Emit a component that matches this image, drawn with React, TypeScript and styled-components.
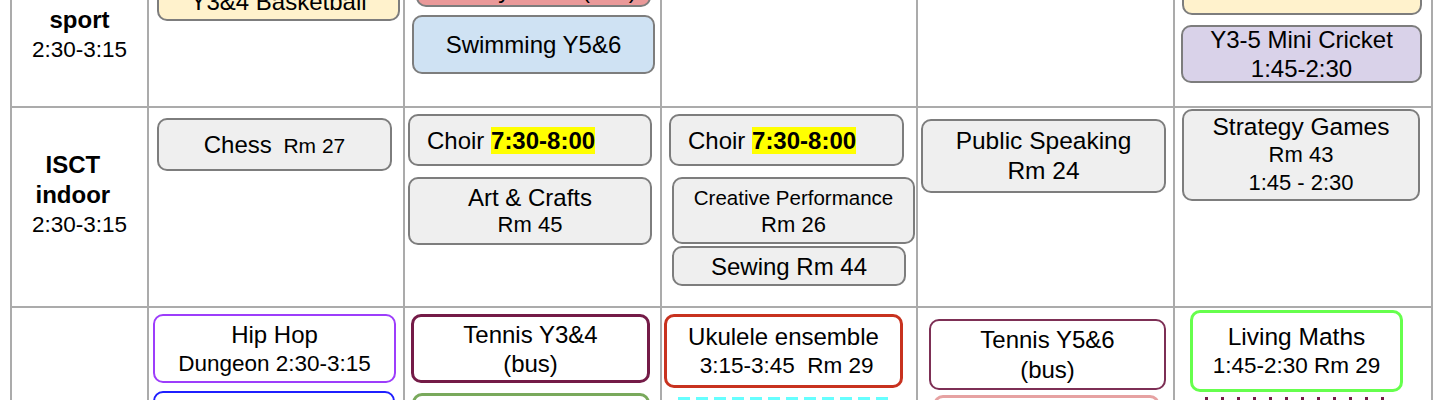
import styled, { createGlobalStyle } from 'styled-components';

const GlobalStyle = createGlobalStyle`
	body {
		margin: 0;
		background: #fff;
		color: #000;
		font-family: 'Liberation Sans', Arial, sans-serif;
		overflow: hidden;
	}
`;

const Timetable = () => {
	return (
		<>
			<GlobalStyle />
			<Table>
				{/* row 1: outdoor sport */}
				<Label>
					<Strong>ISCT</Strong>
					<Strong>sport</Strong>
					<Time>2:30-3:15</Time>
				</Label>
				<Cell>
					<Card $x={8} $top={48} $w={243} $h={40} $fill='#fff2cc'>
						<Line>Y3&amp;4 Basketball</Line>
					</Card>
				</Cell>
				<Cell>
					<Card $x={11} $top={38} $w={235} $h={36} $fill='#ea9999'>
						<Line>Hockey Y5&amp;6 (bus)</Line>
					</Card>
					<Card $x={7} $top={8} $w={243} $h={59} $fill='#cfe2f3'>
						<Line>Swimming Y5&amp;6</Line>
					</Card>
				</Cell>
				<Cell />
				<Cell />
				<Cell>
					<Card $x={7} $top={22} $w={240} $h={60} $fill='#fff2cc'>
						<Line>Y5&amp;6 Netball</Line>
					</Card>
					<Card $x={6} $top={10} $w={241} $h={58} $fill='#d9d2e9'>
						<Line>Y3-5 Mini Cricket</Line>
						<Line>1:45-2:30</Line>
					</Card>
				</Cell>

				{/* row 2: indoor */}
				<Label>
					<Strong>ISCT{'\u00a0\u00a0'}</Strong>
					<Strong>indoor{'\u00a0\u00a0'}</Strong>
					<Time>2:30-3:15</Time>
				</Label>
				<Cell>
					<Card $x={8} $top={10} $w={235} $h={53} $fill='#efefef'>
						<Line>
							Chess<Small $size={21}>{'\u00a0\u00a0'}Rm 27</Small>
						</Line>
					</Card>
				</Cell>
				<Cell>
					<Card $x={3} $top={6} $w={244} $h={52} $fill='#efefef' $left>
						<Line>
							Choir <Highlight>7:30-8:00</Highlight>
						</Line>
					</Card>
					<Card $x={3} $top={11} $w={244} $h={68} $fill='#efefef'>
						<Line $lh={27}>Art &amp; Crafts</Line>
						<Line $lh={27} $size={22}>
							Rm 45
						</Line>
					</Card>
				</Cell>
				<Cell>
					<Card $x={7} $top={6} $w={235} $h={52} $fill='#efefef' $left>
						<Line>
							Choir <Highlight>7:30-8:00</Highlight>
						</Line>
					</Card>
					<Card $x={10} $top={11} $w={243} $h={67} $fill='#efefef'>
						<Line $lh={27} $size={20.5}>
							Creative Performance
						</Line>
						<Line $lh={27} $size={22}>
							Rm 26
						</Line>
					</Card>
					<Card $x={10} $top={2} $w={234} $h={40} $fill='#efefef'>
						<Line>Sewing Rm 44</Line>
					</Card>
				</Cell>
				<Cell>
					<Card $x={3} $top={11} $w={245} $h={74} $fill='#efefef'>
						<Line $lh={30} $size={24.5}>
							Public Speaking
						</Line>
						<Line $lh={30} $size={24.5}>
							Rm 24
						</Line>
					</Card>
				</Cell>
				<Cell>
					<Card $x={7} $top={1} $w={238} $h={92} $fill='#efefef'>
						<Line $lh={28} $size={24.5}>
							Strategy Games
						</Line>
						<Line $lh={28} $size={22}>
							Rm 43
						</Line>
						<Line $lh={28} $size={22}>
							1:45 - 2:30
						</Line>
					</Card>
				</Cell>

				{/* row 3: clubs */}
				<Label />
				<Cell>
					<Card $x={4} $top={6} $w={243} $h={69} $edge='#9d3dfb'>
						<Line>Hip Hop</Line>
						<Line $size={22.5}>Dungeon 2:30-3:15</Line>
					</Card>
					<Card $x={4} $top={8} $w={242} $h={80} $edge='#1f1fff' />
				</Cell>
				<Cell>
					<Card $x={6} $top={6} $w={239} $h={69} $edge='#741b47' $bw={3}>
						<Line>Tennis Y3&amp;4</Line>
						<Line>(bus)</Line>
					</Card>
					<Card $x={7} $top={10} $w={238} $h={80} $edge='#79a95c' $bw={3} />
				</Cell>
				<Cell>
					<Card $x={2} $top={6} $w={239} $h={74} $edge='#c8321f' $bw={3}>
						<Line>Ukulele ensemble</Line>
						<Line $size={22.5}>{'\u00a03:15-3:45\u00a0\u00a0Rm 29'}</Line>
					</Card>
					<Edge $x={16} $top={9} $w={210} $color='#6ff' $dash={12} $space={6} $thick={4} />
				</Cell>
				<Cell>
					<Card $x={11} $top={11} $w={237} $h={71} $edge='#7d2f55'>
						<Line $lh={30}>Tennis Y5&amp;6</Line>
						<Line $lh={30}>(bus)</Line>
					</Card>
					<Card $x={15} $top={5} $w={227} $h={80} $edge='#e6a2a2' $bw={3} />
				</Cell>
				<Cell>
					<Card $x={15} $top={2} $w={213} $h={82} $edge='#66ff4d' $bw={3}>
						<Line $size={24.5}>Living Maths</Line>
						<Line $size={22.5}>1:45-2:30 Rm 29</Line>
					</Card>
					<Edge $x={30} $top={5} $w={190} $color='#741b47' $dash={3} $space={13} $thick={5} />
				</Cell>
			</Table>
		</>
	);
};

const Table = styled.div`
	display: grid;
	grid-template-columns: 135px 254px 255px 254px 255px 256px;
	grid-template-rows: 173px 198px 160px;
	gap: 2px;
	padding: 2px;
	width: fit-content;
	margin: -69px 0 0 10px;
	background: #ababab;
`;

const Cell = styled.div`
	display: flex;
	flex-direction: column;
	min-width: 0;
	background: #fff;
`;

const Label = styled(Cell)`
	align-items: center;
	padding-top: 42px;
	box-sizing: border-box;
	white-space: pre;
`;

const Strong = styled.div`
	font-weight: bold;
	font-size: 24px;
	line-height: 30px;
`;

const Time = styled.div`
	font-size: 22.5px;
	line-height: 29px;
`;

type CardProps = {
	$x: number;
	$top: number;
	$w: number;
	$h: number;
	$fill?: string;
	$edge?: string;
	$bw?: number;
	$left?: boolean;
};

const Card = styled.div<CardProps>`
	box-sizing: border-box;
	flex: none;
	display: flex;
	flex-direction: column;
	justify-content: center;
	align-items: ${({ $left }) => ($left ? 'flex-start' : 'center')};
	width: ${({ $w }) => $w}px;
	height: ${({ $h }) => $h}px;
	margin: ${({ $top, $x }) => `${$top}px 0 0 ${$x}px`};
	padding-left: ${({ $left }) => ($left ? '17px' : '0')};
	background: ${({ $fill }) => $fill ?? '#fff'};
	border: ${({ $bw }) => $bw ?? 2}px solid ${({ $edge }) => $edge ?? '#7d7d7d'};
	border-radius: 10px;
	white-space: pre;
`;

const Line = styled.div<{ $size?: number; $lh?: number }>`
	font-size: ${({ $size }) => $size ?? 24}px;
	line-height: ${({ $lh }) => $lh ?? 29}px;
`;

const Small = styled.span<{ $size: number }>`
	font-size: ${({ $size }) => $size}px;
`;

const Highlight = styled.span`
	font-weight: bold;
	background: #ffff00;
`;

type EdgeProps = {
	$x: number;
	$top: number;
	$w: number;
	$color: string;
	$dash: number;
	$space: number;
	$thick: number;
};

// only the top edge of these boxes shows at the bottom of the page
const Edge = styled.div<EdgeProps>`
	flex: none;
	width: ${({ $w }) => $w}px;
	height: 60px;
	margin: ${({ $top, $x }) => `${$top}px 0 0 ${$x}px`};
	background-image: repeating-linear-gradient(
		90deg,
		${({ $color }) => $color} 0 ${({ $dash }) => $dash}px,
		transparent ${({ $dash }) => $dash}px ${({ $dash, $space }) => $dash + $space}px
	);
	background-size: 100% ${({ $thick }) => $thick}px;
	background-repeat: no-repeat;
`;

export default Timetable;
